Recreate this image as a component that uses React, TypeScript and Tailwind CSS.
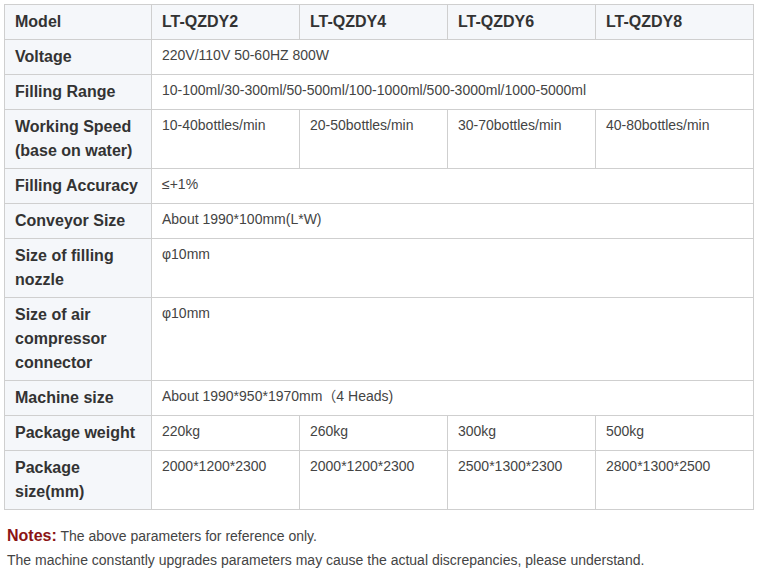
import React from "react";

const models = ["LT-QZDY2", "LT-QZDY4", "LT-QZDY6", "LT-QZDY8"];

type Row = { label: React.ReactNode; values: string[] };

const rows: Row[] = [
  { label: "Voltage", values: ["220V/110V 50-60HZ 800W"] },
  {
    label: "Filling Range",
    values: ["10-100ml/30-300ml/50-500ml/100-1000ml/500-3000ml/1000-5000ml"],
  },
  {
    label: (
      <>
        Working Speed
        <br />
        (base on water)
      </>
    ),
    values: ["10-40bottles/min", "20-50bottles/min", "30-70bottles/min", "40-80bottles/min"],
  },
  { label: "Filling Accuracy", values: ["≤+1%"] },
  { label: "Conveyor Size", values: ["About 1990*100mm(L*W)"] },
  {
    label: (
      <>
        Size of filling
        <br />
        nozzle
      </>
    ),
    values: ["φ10mm"],
  },
  {
    label: (
      <>
        Size of air
        <br />
        compressor
        <br />
        connector
      </>
    ),
    values: ["φ10mm"],
  },
  { label: "Machine size", values: ["About 1990*950*1970mm（4 Heads)"] },
  { label: "Package weight", values: ["220kg", "260kg", "300kg", "500kg"] },
  {
    label: (
      <>
        Package
        <br />
        size(mm)
      </>
    ),
    values: ["2000*1200*2300", "2000*1200*2300", "2500*1300*2300", "2800*1300*2500"],
  },
];

const cell = "border border-[#cfcfcf] px-[10px] py-[5px] align-top text-left";

export default function App() {
  return (
    <div
      className="bg-white p-1 text-[#444]"
      style={{ fontFamily: '"Liberation Sans", Arial, "Noto Sans CJK SC", sans-serif' }}
    >
      <table className="w-[749px] table-fixed border-collapse leading-6">
        <colgroup>
          <col className="w-[147px]" />
          <col className="w-[148px]" />
          <col className="w-[148px]" />
          <col className="w-[148px]" />
          <col className="w-[158px]" />
        </colgroup>
        <thead>
          <tr className="bg-[#f5f7fa]">
            <th className={`${cell} text-base font-bold text-[#333]`}>Model</th>
            {models.map((m) => (
              <th key={m} className={`${cell} text-base font-bold text-[#333]`}>
                {m}
              </th>
            ))}
          </tr>
        </thead>
        <tbody>
          {rows.map((r, i) => (
            <tr key={i}>
              <td className={`${cell} bg-[#f5f7fa] text-base font-bold text-[#333]`}>{r.label}</td>
              {r.values.length === 1 ? (
                <td colSpan={4} className={`${cell} text-sm`}>
                  {r.values[0]}
                </td>
              ) : (
                r.values.map((v, j) => (
                  <td key={j} className={`${cell} text-sm`}>
                    {v}
                  </td>
                ))
              )}
            </tr>
          ))}
        </tbody>
      </table>
      <div className="mt-[14px] pl-[3px] text-sm leading-6">
        <p>
          <span className="text-base font-bold text-[#8b1414]">Notes:</span> The above parameters
          for reference only.
        </p>
        <p>The machine constantly upgrades parameters may cause the actual discrepancies, please understand.</p>
      </div>
    </div>
  );
}
